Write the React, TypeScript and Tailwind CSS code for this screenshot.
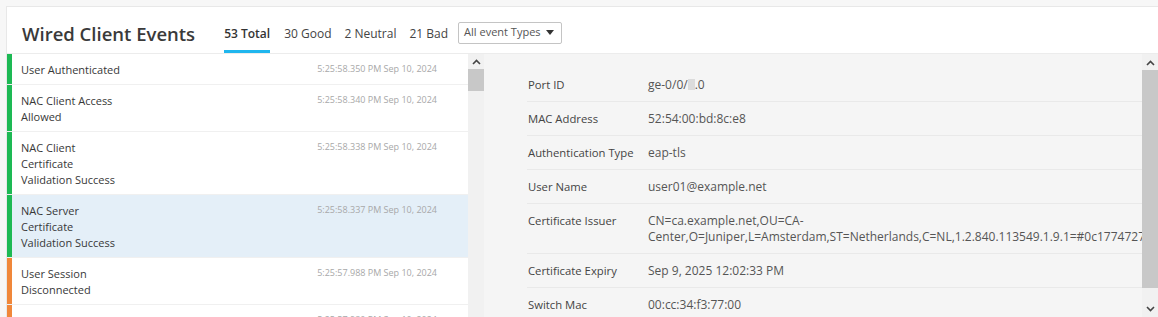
import React from "react";

const events = [
  { title: "User Authenticated", time: "5:25:58.350 PM Sep 10, 2024", color: "bg-[#1db954]", selected: false },
  { title: "NAC Client Access Allowed", time: "5:25:58.340 PM Sep 10, 2024", color: "bg-[#1db954]", selected: false },
  { title: "NAC Client Certificate Validation Success", time: "5:25:58.338 PM Sep 10, 2024", color: "bg-[#1db954]", selected: false },
  { title: "NAC Server Certificate Validation Success", time: "5:25:58.337 PM Sep 10, 2024", color: "bg-[#1db954]", selected: true },
  { title: "User Session Disconnected", time: "5:25:57.988 PM Sep 10, 2024", color: "bg-[#f0873a]", selected: false },
  { title: "User Session Disconnected", time: "5:25:57.980 PM Sep 10, 2024", color: "bg-[#f0873a]", selected: false },
];

const details: { label: string; value: React.ReactNode }[] = [
  {
    label: "Port ID",
    value: (
      <span>
        ge-0/0/<span className="inline-block w-[7px] h-[11px] bg-[#dcdcdc] align-[-1px]"></span>.0
      </span>
    ),
  },
  { label: "MAC Address", value: "52:54:00:bd:8c:e8" },
  { label: "Authentication Type", value: "eap-tls" },
  { label: "User Name", value: "user01@example.net" },
  {
    label: "Certificate Issuer",
    value:
      "CN=ca.example.net,OU=CA-Center,O=Juniper,L=Amsterdam,ST=Netherlands,C=NL,1.2.840.113549.1.9.1=#0c17747275737465646361406578616d706c652e6e6574",
  },
  { label: "Certificate Expiry", value: "Sep 9, 2025 12:02:33 PM" },
  { label: "Switch Mac", value: "00:cc:34:f3:77:00" },
  { label: "Switch Name", value: "switch01" },
];

function ChevronUp() {
  return (
    <svg width="9" height="6" viewBox="0 0 9 6" className="block">
      <path d="M1 5 L4.5 1.5 L8 5" fill="none" stroke="#444" strokeWidth="1.6" />
    </svg>
  );
}
function ChevronDown() {
  return (
    <svg width="9" height="6" viewBox="0 0 9 6" className="block">
      <path d="M1 1 L4.5 4.5 L8 1" fill="none" stroke="#444" strokeWidth="1.6" />
    </svg>
  );
}

export default function App() {
  return (
    <div className="w-[1158px] h-[317px] overflow-hidden bg-[#f7f7f7] pt-[6px] pl-[6px] font-['Open_Sans',sans-serif]">
      <div className="bg-white border-t border-l border-[#e8e8e8] h-[311px] flex flex-col">
        {/* header */}
        <div className="h-[47px] shrink-0 flex border-b border-[#ececec] pl-[15px]">
          <div className="h-[46px] flex items-center pt-[8px] text-[18.5px] font-semibold text-[#3a3a3a] whitespace-nowrap">
            Wired Client Events
          </div>
          <div className="flex ml-[29px] h-[46px] text-[12px] text-[#444] whitespace-nowrap">
            <div className="h-[46px] flex flex-col pt-[11px]">
              <div className="flex-1 flex items-center font-semibold text-[#333]">53 Total</div>
              <div className="h-[3px] bg-[#1fb6ee]"></div>
            </div>
            <div className="h-[46px] flex items-center pt-[8px] ml-[14px]">30 Good</div>
            <div className="h-[46px] flex items-center pt-[8px] ml-[13px]">2 Neutral</div>
            <div className="h-[46px] flex items-center pt-[8px] ml-[13px]">21 Bad</div>
            <div className="h-[46px] flex items-center pt-[5px] ml-[10px]">
              <div className="w-[104px] h-[22px] border border-[#c4c4c4] rounded-[2px] flex items-center justify-between pl-[5px] pr-[7px] text-[11px] text-[#555]">
                <span>All event Types</span>
                <svg width="8" height="5" viewBox="0 0 8 5">
                  <path d="M0 0 L8 0 L4 5 Z" fill="#333" />
                </svg>
              </div>
            </div>
          </div>
        </div>

        {/* body */}
        <div className="flex flex-1 min-h-0">
          {/* list */}
          <div className="w-[461px] shrink-0 flex flex-col overflow-hidden">
            {events.map((e, i) => (
              <div key={i} className="flex border-b border-[#f0f0f0] shrink-0">
                <div className={`w-[5px] shrink-0 ${e.color}`}></div>
                <div
                  className={`flex-1 flex justify-between pl-[9px] pr-[31px] pt-[8px] pb-[6px] ${
                    e.selected ? "bg-[#e4eff8]" : "bg-white"
                  }`}
                >
                  <div className="w-[102px] text-[11px] leading-[16px] font-medium text-[#383838]">{e.title}</div>
                  <div className="text-[9px] leading-[14px] text-[#a8a8a8] whitespace-nowrap">{e.time}</div>
                </div>
              </div>
            ))}
          </div>
          {/* list scrollbar */}
          <div className="w-[16px] shrink-0 bg-[#f1f1f1] flex flex-col items-center">
            <div className="h-[15px] flex items-center justify-center pt-[1px]">
              <ChevronUp />
            </div>
            <div className="w-[16px] h-[22px] bg-[#c8c8c8]"></div>
          </div>
          {/* details */}
          <div className="flex-1 min-w-0 bg-[#f5f5f5] pt-[14px] pl-[43px] overflow-hidden">
            {details.map((d, i) => (
              <div key={i} className="flex border-b border-[#e9e9e9] pt-[9px] pb-[8px] text-[12px] leading-[16px]">
                <div className="w-[121px] shrink-0 pl-[1px] text-[11.3px] font-medium text-[#444]">{d.label}</div>
                <div className="flex-1 min-w-0 text-[#555]">{d.value}</div>
              </div>
            ))}
          </div>
          {/* details scrollbar */}
          <div className="w-[16px] shrink-0 bg-[#f1f1f1] flex flex-col items-center">
            <div className="h-[16px] flex items-center justify-center pt-[1px]">
              <ChevronUp />
            </div>
            <div className="w-[16px] h-[218px] bg-[#c8c8c8]"></div>
            <div className="flex-1 flex items-end justify-center pb-[5px]">
              <ChevronDown />
            </div>
          </div>
        </div>
      </div>
    </div>
  );
}
